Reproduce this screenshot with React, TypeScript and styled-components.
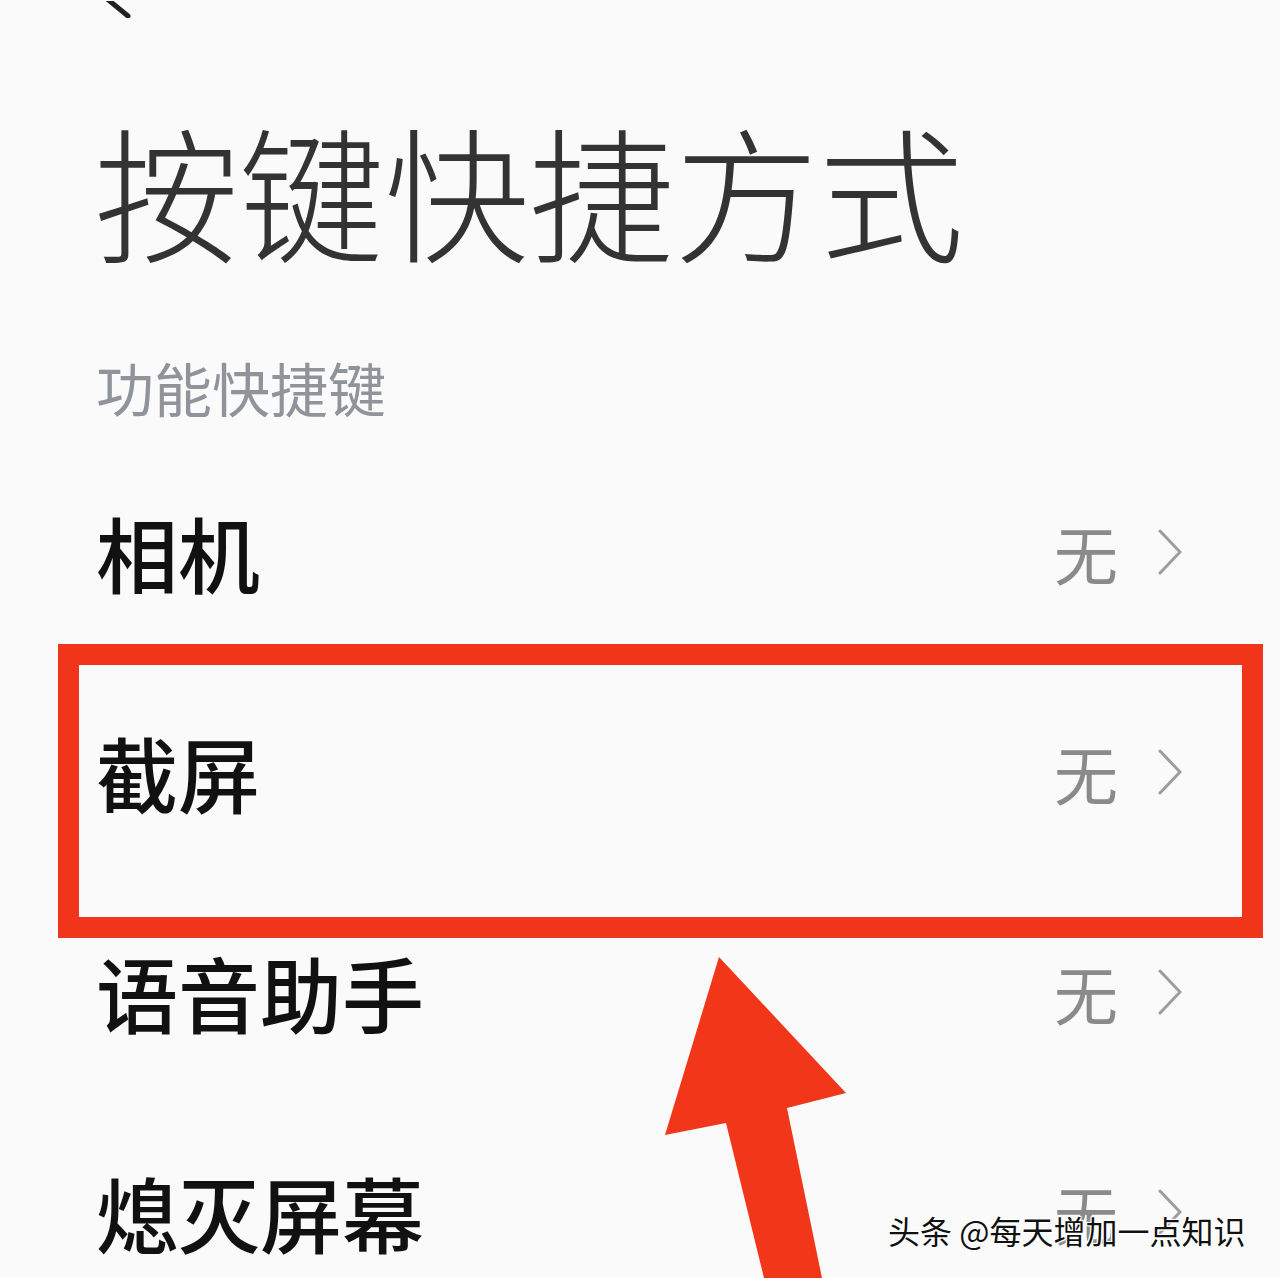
import React from "react";
import styled, { createGlobalStyle } from "styled-components";

const Global = createGlobalStyle`
  html, body { margin: 0; padding: 0; background: #fafafa; }
  body { font-family: "Noto Sans CJK SC", "Noto Sans", sans-serif; }
`;

const Page = styled.div`
  position: relative;
  width: 1280px;
  height: 1278px;
  overflow: hidden;
  background: #fafafa;
`;

const TopBar = styled.div`
  height: 18px;
  overflow: hidden;
  padding-left: 96px;
`;

const Content = styled.div`
  padding: 0 98px 0 96px;
  display: flex;
  flex-direction: column;
`;

const Title = styled.h1`
  margin: 99px 0 0 -2px;
  font-size: 145px;
  line-height: 1;
  font-weight: 300;
  color: #333333;
  letter-spacing: 0;
  white-space: nowrap;
`;

const Section = styled.div`
  margin-top: 96px;
  font-size: 58px;
  line-height: 1;
  color: #8f949b;
  font-weight: 400;
`;

const List = styled.div`
  margin-top: 26px;
  display: flex;
  flex-direction: column;
`;

const Row = styled.div`
  height: 220px;
  display: flex;
  align-items: center;
  justify-content: space-between;
`;

const Label = styled.span`
  font-size: 82px;
  line-height: 1;
  font-weight: 500;
  color: #111111;
`;

const Value = styled.span`
  display: flex;
  align-items: center;
  gap: 40px;
  font-size: 64px;
  line-height: 1;
  color: #8a8a8a;
`;

const Highlight = styled.div`
  position: absolute;
  left: 58px;
  top: 644px;
  width: 1205px;
  height: 294px;
  box-sizing: border-box;
  border: 21px solid #f0351a;
  pointer-events: none;
`;

const Arrow = styled.svg`
  position: absolute;
  left: 0;
  top: 0;
  pointer-events: none;
`;

const Watermark = styled.div`
  position: absolute;
  left: 888px;
  top: 1210px;
  font-size: 32px;
  line-height: 40px;
  color: #111;
  white-space: nowrap;
  text-shadow: -1px -1px 0 #fff, 1px -1px 0 #fff, -1px 1px 0 #fff, 1px 1px 0 #fff, 0 0 3px #fff;
`;

const Chevron = () => (
  <svg width="24" height="46" viewBox="0 0 24 46">
    <polyline points="2,2 22,23 2,44" fill="none" stroke="#9d9d9d" strokeWidth="3" strokeLinecap="round" strokeLinejoin="round" />
  </svg>
);

const items = ["相机", "截屏", "语音助手", "熄灭屏幕"];

export default function App() {
  return (
    <Page>
      <Global />
      <TopBar>
        <svg width="40" height="18" viewBox="0 0 40 18">
          <polyline points="30,-20 10,-3 32,15" fill="none" stroke="#222" strokeWidth="5" strokeLinecap="round" strokeLinejoin="round" />
        </svg>
      </TopBar>
      <Content>
        <Title>按键快捷方式</Title>
        <Section>功能快捷键</Section>
        <List>
          {items.map((t) => (
            <Row key={t}>
              <Label>{t}</Label>
              <Value>
                无
                <Chevron />
              </Value>
            </Row>
          ))}
        </List>
      </Content>
      <Highlight />
      <Arrow width="1280" height="1278" viewBox="0 0 1280 1278">
        <polygon
          points="719,957 846,1093 787,1108 822,1278 764,1278 726,1123 665,1135"
          fill="#f2361a"
        />
      </Arrow>
      <Watermark>头条 @每天增加一点知识</Watermark>
    </Page>
  );
}
